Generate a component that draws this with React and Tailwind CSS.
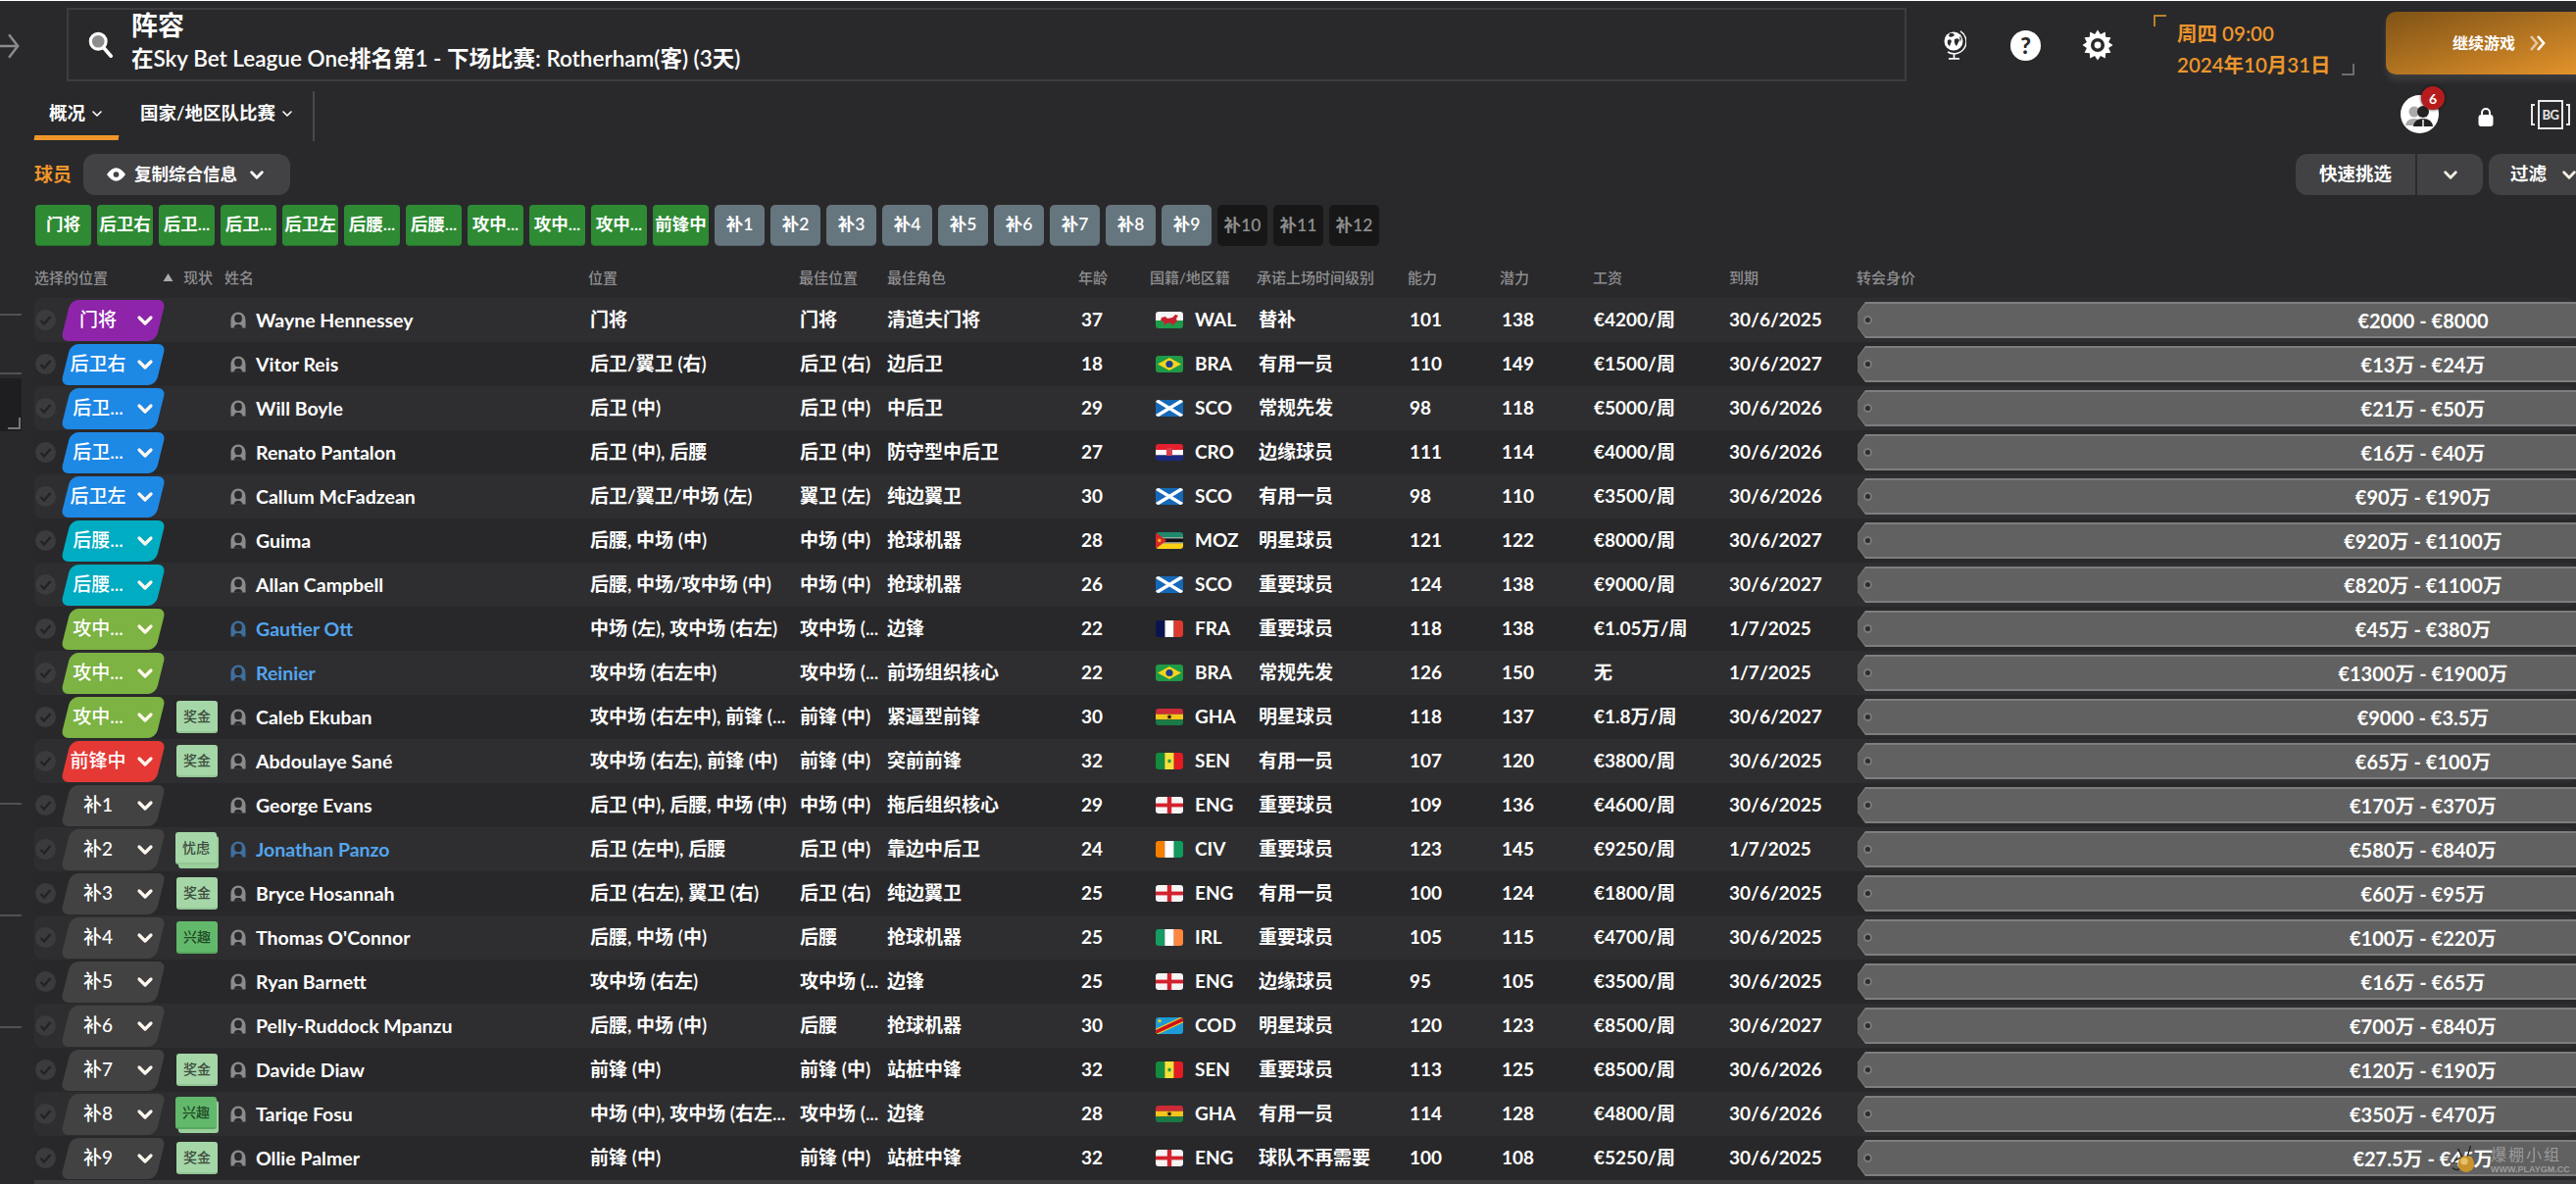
import React from 'react';

const C = {
  purple: 'bg-[#8e24aa]', blue: 'bg-[#1e88e5]', teal: 'bg-[#00acc1]', green: 'bg-[#7cb342]', red: 'bg-[#e53935]', sub: 'bg-[#424242]',
};

const rows = [
  ['门将','purple','','Wayne Hennessey',0,'门将','门将','清道夫门将','37','WAL','替补','101','138','€4200/周','30/6/2025','€2000 - €8000'],
  ['后卫右','blue','','Vitor Reis',0,'后卫/翼卫 (右)','后卫 (右)','边后卫','18','BRA','有用一员','110','149','€1500/周','30/6/2027','€13万 - €24万'],
  ['后卫...','blue','','Will Boyle',0,'后卫 (中)','后卫 (中)','中后卫','29','SCO','常规先发','98','118','€5000/周','30/6/2026','€21万 - €50万'],
  ['后卫...','blue','','Renato Pantalon',0,'后卫 (中), 后腰','后卫 (中)','防守型中后卫','27','CRO','边缘球员','111','114','€4000/周','30/6/2026','€16万 - €40万'],
  ['后卫左','blue','','Callum McFadzean',0,'后卫/翼卫/中场 (左)','翼卫 (左)','纯边翼卫','30','SCO','有用一员','98','110','€3500/周','30/6/2026','€90万 - €190万'],
  ['后腰...','teal','','Guima',0,'后腰, 中场 (中)','中场 (中)','抢球机器','28','MOZ','明星球员','121','122','€8000/周','30/6/2027','€920万 - €1100万'],
  ['后腰...','teal','','Allan Campbell',0,'后腰, 中场/攻中场 (中)','中场 (中)','抢球机器','26','SCO','重要球员','124','138','€9000/周','30/6/2027','€820万 - €1100万'],
  ['攻中...','green','','Gautier Ott',1,'中场 (左), 攻中场 (右左)','攻中场 (...','边锋','22','FRA','重要球员','118','138','€1.05万/周','1/7/2025','€45万 - €380万'],
  ['攻中...','green','','Reinier',1,'攻中场 (右左中)','攻中场 (...','前场组织核心','22','BRA','常规先发','126','150','无','1/7/2025','€1300万 - €1900万'],
  ['攻中...','green','奖金','Caleb Ekuban',0,'攻中场 (右左中), 前锋 (...','前锋 (中)','紧逼型前锋','30','GHA','明星球员','118','137','€1.8万/周','30/6/2027','€9000 - €3.5万'],
  ['前锋中','red','奖金','Abdoulaye Sané',0,'攻中场 (右左), 前锋 (中)','前锋 (中)','突前前锋','32','SEN','有用一员','107','120','€3800/周','30/6/2025','€65万 - €100万'],
  ['补1','sub','','George Evans',0,'后卫 (中), 后腰, 中场 (中)','中场 (中)','拖后组织核心','29','ENG','重要球员','109','136','€4600/周','30/6/2025','€170万 - €370万'],
  ['补2','sub','忧虑','Jonathan Panzo',1,'后卫 (左中), 后腰','后卫 (中)','靠边中后卫','24','CIV','重要球员','123','145','€9250/周','1/7/2025','€580万 - €840万'],
  ['补3','sub','奖金','Bryce Hosannah',0,'后卫 (右左), 翼卫 (右)','后卫 (右)','纯边翼卫','25','ENG','有用一员','100','124','€1800/周','30/6/2025','€60万 - €95万'],
  ['补4','sub','兴趣','Thomas O\'Connor',0,'后腰, 中场 (中)','后腰','抢球机器','25','IRL','重要球员','105','115','€4700/周','30/6/2025','€100万 - €220万'],
  ['补5','sub','','Ryan Barnett',0,'攻中场 (右左)','攻中场 (...','边锋','25','ENG','边缘球员','95','105','€3500/周','30/6/2025','€16万 - €65万'],
  ['补6','sub','','Pelly-Ruddock Mpanzu',0,'后腰, 中场 (中)','后腰','抢球机器','30','COD','明星球员','120','123','€8500/周','30/6/2027','€700万 - €840万'],
  ['补7','sub','奖金','Davide Diaw',0,'前锋 (中)','前锋 (中)','站桩中锋','32','SEN','重要球员','113','125','€8500/周','30/6/2026','€120万 - €190万'],
  ['补8','sub','兴趣2','Tariqe Fosu',0,'中场 (中), 攻中场 (右左...','攻中场 (...','边锋','28','GHA','有用一员','114','128','€4800/周','30/6/2026','€350万 - €470万'],
  ['补9','sub','奖金','Ollie Palmer',0,'前锋 (中)','前锋 (中)','站桩中锋','32','ENG','球队不再需要','100','108','€5250/周','30/6/2025','€27.5万 - €45万'],
];

const Chev = ({ className = 'w-[18px] h-[12px]', color = '#fff', sw = 3.2 }) => (
  <svg viewBox="0 0 18 12" className={className} fill="none" stroke={color} strokeWidth={sw} strokeLinecap="round" strokeLinejoin="round">
    <polyline points="3,3 9,9 15,3" />
  </svg>
);

const Star = ({ cx, cy, r, fill }) => {
  const pts = [];
  for (let i = 0; i < 10; i++) {
    const a = -Math.PI / 2 + (i * Math.PI) / 5;
    const rr = i % 2 ? r * 0.42 : r;
    pts.push(`${cx + rr * Math.cos(a)},${cy + rr * Math.sin(a)}`);
  }
  return <polygon points={pts.join(' ')} fill={fill} />;
};

const Flag = ({ code }) => {
  const inner = {
    WAL: <><rect width="28" height="9" fill="#f4f4f4" /><rect y="9" width="28" height="8" fill="#1f9a4a" /><path d="M6 6 L10 5 L12 7 L17 6 L20 3 L23 4 L21 7 L22 10 L19 12 L17 14 L15 11 L11 12 L9 14 L8 10 L5 9 Z" fill="#c8202f" /></>,
    BRA: <><rect width="28" height="17" fill="#1f9a46" /><polygon points="14,2 26,8.5 14,15 2,8.5" fill="#f3d51e" /><circle cx="14" cy="8.5" r="3.6" fill="#1d3f8f" /></>,
    SCO: <><rect width="28" height="17" fill="#1569b8" /><path d="M0 0 L28 17 M28 0 L0 17" stroke="#fff" strokeWidth="3.4" /></>,
    CRO: <><rect width="28" height="6" fill="#e5202e" /><rect y="6" width="28" height="5.5" fill="#fff" /><rect y="11.5" width="28" height="5.5" fill="#1b2a80" /><rect x="11" y="4" width="6" height="8" rx="1.5" fill="#d9404c" /></>,
    MOZ: <><rect width="28" height="5.5" fill="#1d8a6b" /><rect y="5.5" width="28" height="1" fill="#fff" /><rect y="6.5" width="28" height="4" fill="#111" /><rect y="10.5" width="28" height="1" fill="#fff" /><rect y="11.5" width="28" height="5.5" fill="#fbd116" /><polygon points="0,0 11,8.5 0,17" fill="#d8262c" /><Star cx={3.8} cy={8.5} r={2.6} fill="#fbd116" /></>,
    FRA: <><rect width="9.5" height="17" fill="#0c1450" /><rect x="9.5" width="9" height="17" fill="#fff" /><rect x="18.5" width="9.5" height="17" fill="#dc3a2e" /></>,
    GHA: <><rect width="28" height="5.7" fill="#ce2b37" /><rect y="5.7" width="28" height="5.6" fill="#f6c51c" /><rect y="11.3" width="28" height="5.7" fill="#1a7a46" /><Star cx={14} cy={8.5} r={2.9} fill="#111" /></>,
    SEN: <><rect width="9.3" height="17" fill="#148a3f" /><rect x="9.3" width="9.4" height="17" fill="#f4e23a" /><rect x="18.7" width="9.3" height="17" fill="#e31b23" /><Star cx={14} cy={8.5} r={2.7} fill="#148a3f" /></>,
    ENG: <><rect width="28" height="17" fill="#f5f5f5" /><rect x="11.8" width="4.4" height="17" fill="#d2222d" /><rect y="6.6" width="28" height="3.8" fill="#d2222d" /></>,
    CIV: <><rect width="9.3" height="17" fill="#f77f00" /><rect x="9.3" width="9.4" height="17" fill="#fff" /><rect x="18.7" width="9.3" height="17" fill="#119a5c" /></>,
    IRL: <><rect width="9.3" height="17" fill="#169b62" /><rect x="9.3" width="9.4" height="17" fill="#fff" /><rect x="18.7" width="9.3" height="17" fill="#ff883e" /></>,
    COD: <><rect width="28" height="17" fill="#1e9ad6" /><path d="M0 15 L28 2" stroke="#f7d618" strokeWidth="6" /><path d="M0 15 L28 2" stroke="#ce1021" strokeWidth="3.6" /><Star cx={4} cy={3.6} r={2.6} fill="#f7d618" /></>,
  }[code];
  return <svg viewBox="0 0 28 17" className="w-[28px] h-[17px] rounded-[3px] shrink-0">{inner}</svg>;
};

const Person = ({ blue }) => {
  const c = blue ? '#3f6f9c' : '#8b8b8b';
  return (
    <svg viewBox="0 0 16 17" className="w-[16px] h-[17px] shrink-0">
      <path d="M0.5 16.5 V8 A7.5 7.5 0 0 1 15.5 8 V16.5 Z" fill={c} />
      <ellipse cx="8" cy="7" rx="3.9" ry="4.2" fill="#2a2a2c" />
      <path d="M3.6 16.8 Q4 13.4 6.6 13 L9.4 13 Q12 13.4 12.4 16.8 Z" fill="#2a2a2c" />
    </svg>
  );
};

const Badge = ({ t }) => {
  if (!t) return <div />;
  const stacked = t === '忧虑' || t === '兴趣2';
  const label = t === '兴趣2' ? '兴趣' : t;
  const green = label === '兴趣';
  return (
    <div className="relative w-[42px] h-[33px]">
      {stacked && <div className="absolute left-[2px] top-[3px] w-[41px] h-[33px] rounded-[3px] bg-[#98cf9b]" />}
      <div className={`absolute ${stacked ? 'left-[-1px] top-[-1px]' : 'left-0 top-0'} w-[42px] h-[33px] rounded-[3px] flex items-center justify-center text-[14px] font-medium border-b-2 ${green ? 'bg-[#63b96b] border-[#58a85f] text-[#1f4a28]' : 'bg-[#a5d6a7] border-[#93c695] text-[#3c4c3d]'}`}>
        {label}
      </div>
    </div>
  );
};

const rowGrid = 'grid grid-cols-[27px_118px_55px_367px_214px_89px_198px_76px_105px_154px_94px_94px_138px_131px_1154px] items-center';

const Row = ({ r, i }) => {
  const [pos, col, badge, name, blue, p, best, role, age, nat, promise, ab, pot, wage, exp, val] = r;
  return (
    <div className={`${rowGrid} h-[45px] text-[19px] font-semibold text-white rounded-lg ${i % 2 === 0 ? 'bg-[#2e2e30]' : 'bg-[#28282a]'}`}>
      <div className="flex items-center pl-[1px]">
        <svg viewBox="0 0 21 21" className="w-[21px] h-[21px]">
          <circle cx="10.5" cy="10.5" r="10.5" fill="#3b3b3d" />
          <polyline points="5.5,11 9,14.5 15.5,7" fill="none" stroke="#232325" strokeWidth="2.4" />
        </svg>
      </div>
      <div className="relative w-[107px] h-[42px]">
        <div className={`absolute inset-y-0 left-[5px] w-[97px] rounded-[8px] skew-x-[-14deg] ${C[col]}`} />
        <div className="relative flex items-center h-full">
          <span className="w-[76px] text-center text-[19px] font-medium whitespace-nowrap">{pos}</span>
          <Chev className="w-[18px] h-[12px] ml-[1px]" color="#fff8ee" />
        </div>
      </div>
      <Badge t={badge} />
      <div className="flex items-center gap-[10px] text-[19.5px] font-bold">
        <Person blue={blue} />
        <span className={blue ? 'text-[#53a5ee]' : ''}>{name}</span>
      </div>
      <div className="whitespace-nowrap">{p}</div>
      <div className="whitespace-nowrap">{best}</div>
      <div className="whitespace-nowrap">{role}</div>
      <div className="font-bold">{age}</div>
      <div className="flex items-center gap-[12px] font-bold"><Flag code={nat} /><span>{nat}</span></div>
      <div className="whitespace-nowrap">{promise}</div>
      <div className="font-bold">{ab}</div>
      <div className="font-bold">{pot}</div>
      <div className="font-bold whitespace-nowrap">{wage}</div>
      <div className="font-bold">{exp}</div>
      <div className="h-[37px] bg-[#7e7e7e] [clip-path:polygon(8px_0,100%_0,100%_100%,8px_100%,0_70%,0_30%)] py-[2px]">
        <div className="relative h-full bg-[#616161] [clip-path:polygon(8px_0,100%_0,100%_100%,8px_100%,0_70%,0_30%)] flex items-center justify-center text-[20px] font-bold">
          <span className="absolute left-[6px] top-[12px] w-[9px] h-[9px] rounded-full bg-[#2b2b2d] border-2 border-[#7a7a7a]" />
          {val}
        </div>
      </div>
    </div>
  );
};

const Gear = () => {
  const pts = [];
  for (let i = 0; i < 24; i++) {
    const a = (i * Math.PI) / 12;
    const rr = i % 2 ? 11.5 : 15.5;
    pts.push(`${16 + rr * Math.cos(a)},${16 + rr * Math.sin(a)}`);
  }
  return (
    <svg viewBox="0 0 32 32" className="w-[32px] h-[32px]">
      <polygon points={pts.join(' ')} fill="#fff" />
      <circle cx="16" cy="16" r="7" fill="#29292b" />
      <circle cx="16" cy="16" r="3.4" fill="#fff" />
    </svg>
  );
};

const Globe = () => (
  <svg viewBox="0 0 24 30" className="w-[24px] h-[30px]">
    <circle cx="11" cy="11" r="9.5" fill="#fff" />
    <path d="M7 3 q4 -1 5 2 q-3 3 -6 1z M5 10 q3 -2 4 1 l-2 5 q-3 -2 -2 -6z M12 9 q4 -2 5 1 l-3 6 q-3 -3 -2 -7z M17 6 l2 2 -1 4z" fill="#2a2a2c" />
    <path d="M18 0.8 A12 12 0 0 1 5 22" fill="none" stroke="#fff" strokeWidth="1.5" />
    <path d="M11.5 23.5 V28 M6 28.8 H17" stroke="#fff" strokeWidth="1.7" fill="none" />
  </svg>
);

const Header = () => (
  <div className="h-[89px] flex items-start relative">
    <div className="w-[68px] shrink-0 h-full flex items-start">
      <svg viewBox="0 0 22 34" className="w-[20px] h-[32px] mt-[30px]" fill="none" stroke="#8a8a8c" strokeWidth="2.8">
        <path d="M0 17 H20 M10 4 L20 17 L10 30" />
      </svg>
    </div>
    <div className="w-[1877px] shrink-0 h-[75px] mt-[7px] border-2 border-[#3d3d3f] flex items-center">
      <svg viewBox="0 0 28 30" className="w-[26px] h-[28px] ml-[20px]" fill="none">
        <circle cx="11" cy="11" r="8.5" fill="#8d8d8d" stroke="#fff" strokeWidth="3.4" />
        <path d="M17 18 L25 27" stroke="#fff" strokeWidth="4" strokeLinecap="round" />
      </svg>
      <div className="ml-[18px] text-white font-semibold mt-[-5px]">
        <div className="text-[27px] leading-[32px]">阵容</div>
        <div className="text-[22.5px] leading-[32px] mt-[2px] whitespace-nowrap">在Sky Bet League One排名第1 - 下场比赛: Rotherham(客) (3天)</div>
      </div>
    </div>
    <div className="ml-[37px] mt-[30px] shrink-0"><Globe /></div>
    <div className="ml-[45px] mt-[30px] shrink-0 w-[31px] h-[31px] rounded-full bg-white flex items-center justify-center text-[#2a2a2c] text-[23px] font-black leading-none">?</div>
    <div className="ml-[42px] mt-[29px] shrink-0"><Gear /></div>
    <div className="relative ml-[41px] mt-[14px] shrink-0 w-[205px] h-[62px] text-[#ec962c] text-[20.5px] font-semibold">
      <div className="absolute left-0 top-0 w-[13px] h-[12px] border-l-2 border-t-2 border-[#b9812f]" />
      <div className="absolute right-0 bottom-0 w-[13px] h-[12px] border-r-2 border-b-2 border-[#6d6d6d]" />
      <div className="pl-[24px] leading-[28px] mt-[5px] whitespace-nowrap">周四 09:00</div>
      <div className="pl-[24px] leading-[28px] mt-[4px] whitespace-nowrap">2024年10月31日</div>
    </div>
    <div className="ml-[32px] mt-[11px] w-[220px] shrink-0 h-[64px] rounded-l-[10px] bg-gradient-to-br from-[#7f5316] to-[#ea972c] shadow-[0_6px_6px_#3c3c3e] flex items-center pl-[68px] text-white text-[16px] font-semibold whitespace-nowrap">
      继续游戏
      <svg viewBox="0 0 18 18" className="w-[18px] h-[18px] ml-[14px]" fill="none" strokeWidth="2.6">
        <path d="M2 2 L8 9 L2 16" stroke="#e6c6a0" />
        <path d="M9 2 L15 9 L9 16" stroke="#fff" />
      </svg>
    </div>
  </div>
);

const Tabs = () => (
  <div className="h-[54px] flex items-stretch pr-[6px] relative">
    <div className="relative w-[86px] flex items-center pl-[15px] pb-[3px] text-[18.5px] text-white font-semibold">
      概况<Chev className="w-[12px] h-[8px] ml-[6px]" sw={2.4} />
      <div className="absolute left-0 bottom-[1px] w-[86px] h-[5px] bg-[#f0962a] skew-x-[-10deg]" />
    </div>
    <div className="flex items-center ml-[22px] pb-[3px] text-[18.5px] text-white font-semibold">
      国家/地区队比赛<Chev className="w-[12px] h-[8px] ml-[6px]" sw={2.4} />
    </div>
    <div className="w-[2px] ml-[20px] bg-[#49494b] mt-[3px]" />
    <div className="ml-auto flex items-center">
      <div className="relative w-[39px] h-[39px] rounded-full bg-white overflow-visible mt-[-1px]">
        <svg viewBox="0 0 39 39" className="w-[39px] h-[39px]">
          <circle cx="14" cy="17" r="5.5" fill="#aaa" /><path d="M5 31 q1 -7 9 -7 q7 0 8 7z" fill="#aaa" />
          <circle cx="23" cy="17" r="6" fill="#222" /><path d="M13 32 q1 -8 10 -8 q9 0 10 8z" fill="#222" />
          <path d="M23 25 V32" stroke="#fff" strokeWidth="1.4" />
        </svg>
        <div className="absolute left-[21px] top-[-9px] w-[24px] h-[24px] rounded-full bg-[#b71c1c] shadow-[0_0_3px_#111] flex items-center justify-center text-white text-[14px] font-bold">6</div>
      </div>
      <svg viewBox="0 0 16 20" className="w-[16px] h-[20px] ml-[40px] mt-[3px]">
        <path d="M4 9 V6 A4 4 0 0 1 12 6 V9" fill="none" stroke="#fff" strokeWidth="2" />
        <rect x="0.5" y="8" width="15" height="12" rx="3" fill="#fff" />
      </svg>
      <div className="ml-[38px] flex items-center text-[#e8e8e8]">
        <span className="w-[4px] h-[22px] border-l-2 border-y-2 border-[#e8e8e8]" />
        <span className="mx-[3px] w-[26px] h-[30px] border-[2px] border-[#e8e8e8] flex items-center justify-center text-[13px] tracking-[-0.5px] font-bold leading-none">BG</span>
        <span className="w-[4px] h-[22px] border-r-2 border-y-2 border-[#e8e8e8]" />
      </div>
    </div>
  </div>
);

const Filters = () => (
  <div className="h-[42px] mt-[13px] flex items-center text-white font-semibold">
    <span className="text-[19px] text-[#f0962a] w-[50px]">球员</span>
    <div className="w-[211px] h-[42px] rounded-[12px] bg-[#424244] flex items-center pl-[24px] text-[17.5px]">
      <svg viewBox="0 0 20 14" className="w-[19px] h-[14px]"><path d="M0 7 Q10 -7 20 7 Q10 21 0 7Z" fill="#fff" /><circle cx="10" cy="7" r="3" fill="#424244" /></svg>
      <span className="ml-[9px]">复制综合信息</span>
      <Chev className="w-[16px] h-[11px] ml-[12px]" />
    </div>
    <div className="ml-auto mr-[-11px] flex items-center">
      <div className="w-[191px] h-[42px] rounded-[12px] bg-[#424244] flex items-center text-[18.5px]">
        <span className="w-[122px] text-center">快速挑选</span>
        <div className="w-[2px] h-full bg-[#2b2b2d]" />
        <div className="flex-1 flex justify-center"><Chev className="w-[16px] h-[11px]" color="#f5eee2" /></div>
      </div>
      <div className="ml-[6px] w-[100px] h-[42px] rounded-l-[12px] bg-[#424244] flex items-center pl-[22px] text-[18.5px]">
        过滤<Chev className="w-[16px] h-[11px] ml-[15px]" color="#f5eee2" />
      </div>
    </div>
  </div>
);

const chips = ['门将','后卫右','后卫...','后卫...','后卫左','后腰...','后腰...','攻中...','攻中...','攻中...','前锋中'];
const Chips = () => (
  <div className="flex gap-[6px] mt-[10px] pl-[1px] text-[17.5px] font-semibold text-white">
    {chips.map((c, i) => (
      <div key={i} className="w-[57px] h-[42px] rounded-[4px] bg-[#2e8b34] border-b border-[#247129] flex items-center justify-center whitespace-nowrap">{c}</div>
    ))}
    {['1','2','3','4','5','6','7','8','9'].map((n) => (
      <div key={n} className="w-[51px] h-[42px] rounded-[5px] bg-[#66767e] border-b border-[#56646b] flex items-center justify-center">补{n}</div>
    ))}
    {['10','11','12'].map((n) => (
      <div key={n} className="w-[51px] h-[42px] rounded-[5px] bg-[#171717] text-[#8d8d8d] flex items-center justify-center">补{n}</div>
    ))}
  </div>
);

const heads = ['现状','姓名','位置','最佳位置','最佳角色','年龄','国籍/地区籍','承诺上场时间级别','能力','潜力','工资','到期','转会身价'];
const TableHead = () => (
  <div className="grid grid-cols-[152px_42px_371px_215px_90px_195px_73px_109px_154px_94px_95px_139px_130px_200px] items-center h-[34px] mt-[15px] mb-[4px] text-[15px] text-[#8e8e90] font-medium whitespace-nowrap">
    <div className="flex items-center">
      <span>选择的位置</span>
      <svg viewBox="0 0 10 8" className="w-[11px] h-[8px] ml-[56px]"><polygon points="5,0 10,8 0,8" fill="#a9a9ab" /></svg>
    </div>
    {heads.map((h) => <div key={h}>{h}</div>)}
  </div>
);

const LeftStrip = () => (
  <div className="w-[35px] shrink-0">
    <div className="w-[22px] h-[2px] bg-[#515153] mt-[230px]" />
    <div className="w-[22px] h-[2px] bg-[#515153] mt-[58px]" />
    <div className="w-[22px] h-[54px] bg-[#1e1e20] mt-[4px] relative">
      <div className="absolute right-[1px] bottom-[2px] w-[13px] h-[12px] border-r-2 border-b-2 border-[#77777a]" />
    </div>
    <div className="w-[22px] h-[2px] bg-[#515153] mt-[379px]" />
    <div className="w-[22px] h-[2px] bg-[#515153] mt-[112px]" />
    <div className="w-[22px] h-[2px] bg-[#515153] mt-[112px]" />
  </div>
);

export default function App() {
  return (
    <div className="relative w-[2628px] h-[1208px] overflow-hidden bg-[#29292b] border-t border-white font-['Lato','Noto_Sans_CJK_SC',sans-serif]">
      <Header />
      <div className="flex">
        <LeftStrip />
        <div className="flex-1 min-w-0">
          <Tabs />
          <Filters />
          <Chips />
          <TableHead />
          {rows.map((r, i) => <Row key={i} r={r} i={i} />)}
          <div className="h-[4px] bg-[#3b3b3d]" />
        </div>
      </div>
      <div className="absolute left-[2500px] top-[1166px] w-[120px] h-[36px] flex pointer-events-none">
        <svg viewBox="0 0 30 32" className="w-[28px] h-[32px] shrink-0">
          <path d="M3 20 Q8 12 14 16 M8 4 L13 14 M22 1 L18 14 M2 25 Q8 30 13 24" stroke="#222" strokeWidth="1.4" fill="none" />
          <circle cx="17" cy="21" r="9" fill="#c8922c" />
          <circle cx="15" cy="18" r="4" fill="#e6c066" />
        </svg>
        <div className="ml-[13px] text-[#9c9c9c]">
          <div className="text-[16px] leading-[20px] tracking-[2px] whitespace-nowrap font-['Noto_Sans_CJK_SC',sans-serif]">爆棚小组</div>
          <div className="text-[9px] leading-[12px] font-bold whitespace-nowrap font-['Liberation_Sans',sans-serif]">WWW.PLAYGM.CC</div>
        </div>
      </div>
    </div>
  );
}
